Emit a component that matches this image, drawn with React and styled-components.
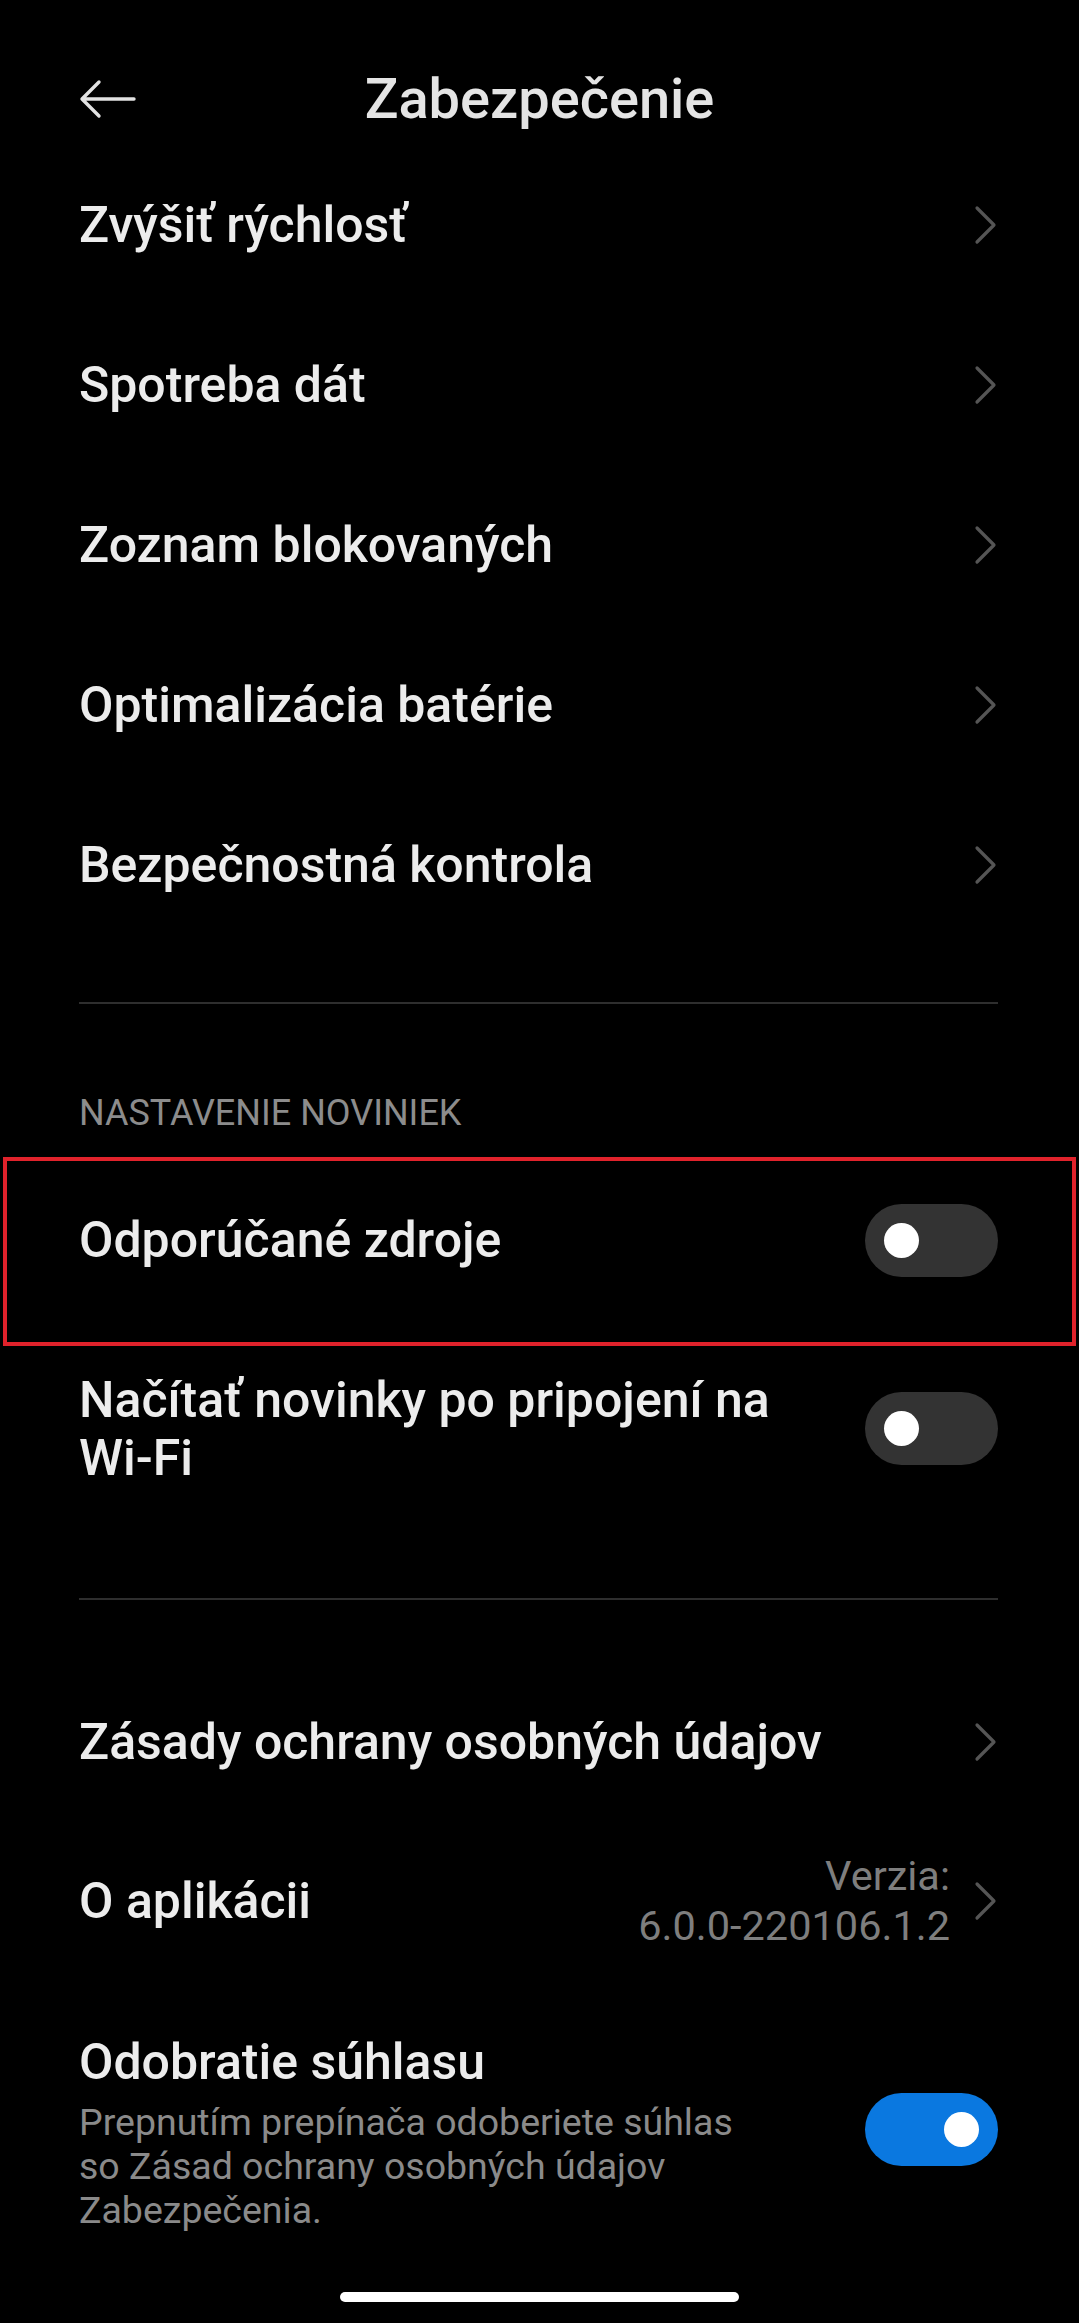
import styled, {createGlobalStyle} from 'styled-components';

const GlobalStyle = createGlobalStyle`
  html, body {
    margin: 0;
    padding: 0;
    background: #000000;
  }
  body {
    font-family: Roboto, "Noto Sans", "Liberation Sans", sans-serif;
    -webkit-font-smoothing: antialiased;
  }
`;

const Page = styled.div`
  width: 1079px;
  height: 2323px;
  background: #000000;
  color: #ebebeb;
  display: flex;
  flex-direction: column;
  overflow: hidden;
`;

const Header = styled.div`
  height: 145px;
  display: grid;
  grid-template-columns: 79px 57px 1fr 136px;
  align-items: center;
  padding-top: 52px;
  box-sizing: border-box;
`;

const BackButton = styled.div`
  grid-column: 2;
  display: flex;
  align-items: center;
  height: 40px;
`;

const Title = styled.h1`
  grid-column: 3;
  margin: 0;
  font-size: 56px;
  font-weight: 500;
  line-height: 64px;
  color: #e4e4e4;
  text-align: center;
`;

const Row = styled.div`
  display: flex;
  align-items: center;
  justify-content: space-between;
  height: ${p => p.height || 160}px;
  padding: 0 81px 0 79px;
  box-sizing: border-box;
`;

const ToggleRow = styled.div`
  display: flex;
  align-items: flex-start;
  justify-content: space-between;
  padding-top: ${p => p.top || 0}px;
  margin: ${p => p.highlight ? '0 3px' : '0'};
  padding-left: ${p => p.highlight ? 72 : 79}px;
  padding-right: ${p => p.highlight ? 74 : 81}px;
  box-sizing: border-box;
  border: ${p => p.highlight ? '4px solid #e0222b' : 'none'};
  height: ${p => p.height}px;
`;

const Label = styled.div`
  font-size: 50px;
  font-weight: 500;
  line-height: 58px;
  color: #ececec;
  margin-top: ${p => p.offset || 0}px;
`;

const TextBlock = styled.div`
  display: flex;
  flex-direction: column;
`;

const Description = styled.div`
  margin-top: 9px;
  font-size: 37.5px;
  line-height: 44px;
  color: #8a8a8a;
`;

const Chevron = styled.svg`
  width: 24px;
  height: 40px;
  flex-shrink: 0;
`;

const Divider = styled.div`
  height: 2px;
  background: #2e2e2e;
  margin: ${p => p.top}px 81px 0 79px;
`;

const SectionHeader = styled.div`
  padding: 0 79px;
  margin-top: 89px;
  margin-bottom: 24px;
  font-size: 36px;
  line-height: 40px;
  color: #8c8c8c;
`;

const ToggleSlot = styled.div`
  margin-top: ${p => p.offset}px;
`;

const Track = styled.div`
  width: 133px;
  height: 73px;
  border-radius: 37px;
  background: ${p => p.on ? '#0a78e0' : '#333333'};
  display: flex;
  align-items: center;
  justify-content: ${p => p.on ? 'flex-end' : 'flex-start'};
  padding: 0 19px;
  box-sizing: border-box;
  flex-shrink: 0;
`;

const Knob = styled.div`
  width: 35px;
  height: 35px;
  border-radius: 50%;
  background: #ffffff;
`;

const Meta = styled.div`
  display: flex;
  align-items: center;
  gap: 24px;
`;

const Version = styled.div`
  font-size: 41.5px;
  line-height: 50px;
  color: #7e7e7e;
  text-align: right;
`;

const HomeBar = styled.div`
  width: 399px;
  height: 10px;
  border-radius: 5px;
  background: #ffffff;
  align-self: center;
  margin-top: auto;
  margin-bottom: 21px;
`;

const ChevronIcon = () => (
    <Chevron viewBox="0 0 24 40">
        <path d="M3 3 L20 20 L3 37" fill="none" stroke="#555555" strokeWidth="3.2" strokeLinecap="round" strokeLinejoin="round"/>
    </Chevron>
);

const Toggle = ({on}) => (
    <Track on={on ? 1 : 0}>
        <Knob/>
    </Track>
);

const links = [
    'Zvýšiť rýchlosť',
    'Spotreba dát',
    'Zoznam blokovaných',
    'Optimalizácia batérie',
    'Bezpečnostná kontrola'
];

export default function App() {
    return (
        <Page>
            <GlobalStyle/>
            <Header>
                <BackButton>
                    <svg width="57" height="40" viewBox="0 0 57 40">
                        <path d="M55 20 H4 M20 3 L3 20 L20 37" fill="none" stroke="#e2e2e2" strokeWidth="3.4" strokeLinecap="round" strokeLinejoin="round"/>
                    </svg>
                </BackButton>
                <Title>Zabezpečenie</Title>
            </Header>

            {links.map(item => (
                <Row key={item}>
                    <Label>{item}</Label>
                    <ChevronIcon/>
                </Row>
            ))}

            <Divider top={57}/>

            <SectionHeader>NASTAVENIE NOVINIEK</SectionHeader>

            <ToggleRow highlight height={189}>
                <Label offset={50}>Odporúčané zdroje</Label>
                <ToggleSlot offset={43}>
                    <Toggle/>
                </ToggleSlot>
            </ToggleRow>

            <ToggleRow height={164} top={25}>
                <Label>Načítať novinky po pripojení na<br/>Wi-Fi</Label>
                <ToggleSlot offset={21}>
                    <Toggle/>
                </ToggleSlot>
            </ToggleRow>

            <Divider top={88}/>

            <Row style={{marginTop: 62}}>
                <Label>Zásady ochrany osobných údajov</Label>
                <ChevronIcon/>
            </Row>
            <Row height={158}>
                <Label>O aplikácii</Label>
                <Meta>
                    <Version>
                        Verzia:<br/>6.0.0-220106.1.2
                    </Version>
                    <ChevronIcon/>
                </Meta>
            </Row>

            <ToggleRow height={220} top={53}>
                <TextBlock>
                    <Label>Odobratie súhlasu</Label>
                    <Description>
                        Prepnutím prepínača odoberiete súhlas<br/>
                        so Zásad ochrany osobných údajov<br/>
                        Zabezpečenia.
                    </Description>
                </TextBlock>
                <ToggleSlot offset={60}>
                    <Toggle on/>
                </ToggleSlot>
            </ToggleRow>

            <HomeBar/>
        </Page>
    );
}
